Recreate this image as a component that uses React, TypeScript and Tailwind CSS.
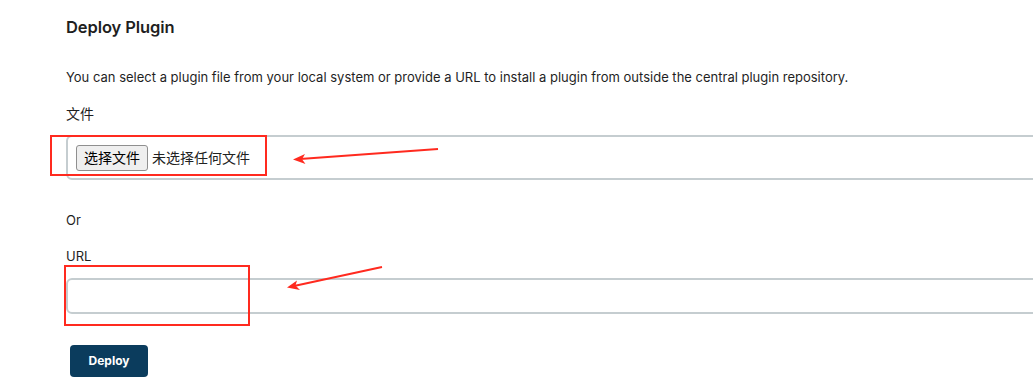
import React from "react";

export default function App() {
  return (
    <div className="relative w-[1033px] h-[383px] overflow-hidden bg-white text-[#1f1f1f] font-['Inter','Noto_Sans_CJK_SC',sans-serif]">
      <div className="pl-[66px] pt-[16px] flex flex-col">
        <h1 className="text-[16.5px] font-semibold leading-[22px] tracking-[-0.1px]">Deploy Plugin</h1>
        <p className="mt-[30px] text-[13px] leading-[18px]">
          You can select a plugin file from your local system or provide a URL to install a plugin from outside the central plugin repository.
        </p>
        <div className="mt-[18px] text-[14px] leading-[18px] font-['Noto_Sans_CJK_SC',sans-serif]">文件</div>
        <div className="mt-[13px] w-[1100px] h-[45px] border-2 border-[#c5cdd0] rounded-[6px] flex items-center pl-[8px]">
          <button className="h-[26px] w-[72px] bg-[#efefef] border border-[#8f8f8f] rounded-[3px] text-[14px] text-black font-['Noto_Sans_CJK_SC',sans-serif]">
            选择文件
          </button>
          <span className="ml-[4px] text-[14px] text-[#222] font-['Noto_Sans_CJK_SC',sans-serif]">未选择任何文件</span>
        </div>
        <div className="mt-[31px] text-[13px] leading-[18px]">Or</div>
        <div className="mt-[18px] text-[13px] leading-[18px]">URL</div>
        <input className="mt-[13px] w-[1100px] h-[36px] border-2 border-[#c5cdd0] rounded-[6px] outline-none" />
        <button className="mt-[31px] ml-[4px] w-[78px] h-[32px] bg-[#0b3c5d] rounded-[4px] text-white text-[12px] font-bold">
          Deploy
        </button>
      </div>

      <div className="absolute left-[50px] top-[135px] w-[217px] h-[41px] border-2 border-[#ff2a1f]" />
      <div className="absolute left-[64px] top-[265px] w-[186px] h-[61px] border-2 border-[#ff2a1f]" />
      <svg className="absolute left-0 top-0" width="1033" height="383">
        <line x1="438" y1="149" x2="300" y2="159" stroke="#ff2a1f" strokeWidth="2" />
        <polygon points="293,159.5 305,154 302,159.2 305.5,164" fill="#ff2a1f" />
        <line x1="382" y1="267" x2="294" y2="286" stroke="#ff2a1f" strokeWidth="2" />
        <polygon points="287,287.5 297,280.5 295.5,285.6 300,290" fill="#ff2a1f" />
      </svg>
    </div>
  );
}
